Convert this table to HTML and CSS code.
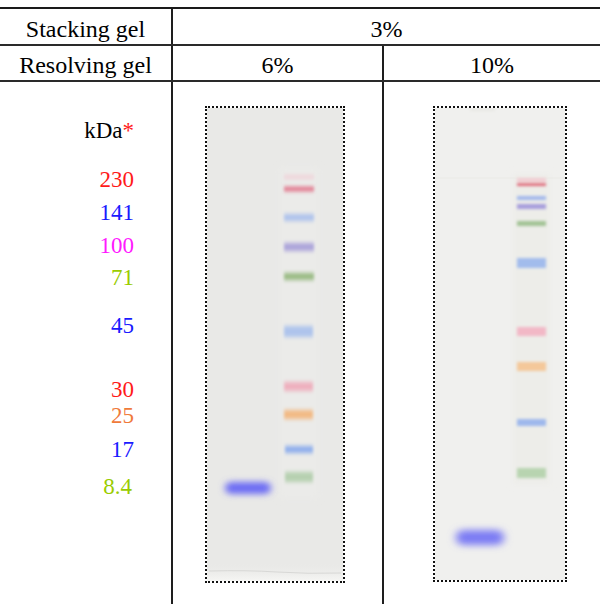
FILE: index.html
```html
<!DOCTYPE html>
<html>
<head>
<meta charset="utf-8">
<link rel="stylesheet" href="styles.css">
</head>
<body>
<div class="table">
  <div class="row row1">
    <div class="cell label">Stacking gel</div>
    <div class="cell wide">3%</div>
  </div>
  <div class="row row2">
    <div class="cell label">Resolving gel</div>
    <div class="cell c6">6%</div>
    <div class="cell c10">10%</div>
  </div>
  <div class="row row3">
    <div class="cell label markers">
      <div class="mk m-kda">kDa<span class="red">*</span></div>
      <div class="mk m230 red">230</div>
      <div class="mk m141 blue">141</div>
      <div class="mk m100 magenta">100</div>
      <div class="mk m71 lime">71</div>
      <div class="mk m45 blue">45</div>
      <div class="mk m30 red">30</div>
      <div class="mk m25 orange">25</div>
      <div class="mk m17 blue">17</div>
      <div class="mk m84 lime">8.4</div>
    </div>
    <div class="cell c6 gelcell">
      <div class="gel gel6">
        <svg width="136" height="473" viewBox="0 0 136 473" xmlns="http://www.w3.org/2000/svg">
          <defs>
            <filter id="b1" x="-50%" y="-300%" width="200%" height="700%"><feGaussianBlur stdDeviation="1.8 2.3"/></filter>
            <filter id="b2" x="-50%" y="-50%" width="200%" height="200%"><feGaussianBlur stdDeviation="3"/></filter>
            <filter id="b3" x="-50%" y="-200%" width="200%" height="500%"><feGaussianBlur stdDeviation="3.5 3"/></filter>
            <linearGradient id="bot1" x1="0" y1="0" x2="0" y2="1">
              <stop offset="0" stop-color="#eaeae8" stop-opacity="0"/>
              <stop offset="1" stop-color="#f6f6f4"/>
            </linearGradient>
          </defs>
          <rect width="136" height="473" fill="#e9e9e7"/>
          <rect x="73" y="60" width="38" height="330" fill="#ebebe9" filter="url(#b2)"/>
          <rect y="455" width="136" height="18" fill="url(#bot1)"/>
          <path d="M2 463 Q40 462 70 464 T134 465" stroke="#d8d8d6" stroke-width="1" fill="none"/>
          <g filter="url(#b1)">
            <rect x="77" y="67" width="30" height="4" fill="#f0d2d8"/>
            <rect x="77" y="79" width="30" height="4" fill="#e0607a"/>
            <rect x="77" y="106" width="30" height="7" fill="#aec2ec"/>
            <rect x="77" y="135" width="30" height="8" fill="#aca4da"/>
            <rect x="77" y="165" width="30" height="7" fill="#98ba82"/>
            <rect x="77" y="218" width="29" height="11" fill="#aec4ec"/>
            <rect x="77" y="274" width="29" height="9" fill="#eeb0be"/>
            <rect x="77" y="302" width="29" height="9" fill="#f2ba84"/>
            <rect x="78" y="338" width="28" height="7" fill="#8eaeec"/>
            <rect x="78" y="364" width="28" height="10" fill="#b6d0b0"/>
          </g>
          <rect x="18" y="374" width="46" height="12" rx="6" fill="#6c6cf4" filter="url(#b3)"/>
        </svg>
      </div>
    </div>
    <div class="cell c10 gelcell">
      <div class="gel gel10">
        <svg width="130" height="472" viewBox="0 0 130 472" xmlns="http://www.w3.org/2000/svg">
          <defs>
            <filter id="d1" x="-50%" y="-300%" width="200%" height="700%"><feGaussianBlur stdDeviation="1.8 1.8"/></filter>
            <filter id="d2" x="-50%" y="-50%" width="200%" height="200%"><feGaussianBlur stdDeviation="3"/></filter>
            <filter id="d3" x="-50%" y="-200%" width="200%" height="500%"><feGaussianBlur stdDeviation="4 3.5"/></filter>
          </defs>
          <rect width="130" height="472" fill="#f0f0ee"/>
          <rect x="78" y="66" width="37" height="310" fill="#edede9" filter="url(#d2)"/>
          <rect x="0" y="69.5" width="130" height="1" fill="#eaeae6"/>
          <rect x="35" y="0" width="25" height="3" fill="#e8e8e4" filter="url(#d1)"/>
          <g filter="url(#d1)">
            <rect x="82" y="70" width="29" height="4" fill="#f2ccd2"/>
            <rect x="82" y="75" width="29" height="3" fill="#e06a7c"/>
            <rect x="82" y="88" width="29" height="4" fill="#a2b8ec"/>
            <rect x="82" y="96" width="29" height="5" fill="#a69ddc"/>
            <rect x="82" y="113" width="29" height="5" fill="#a2c294"/>
            <rect x="82" y="150" width="29" height="10" fill="#a2bcec"/>
            <rect x="82" y="219" width="29" height="9" fill="#f2b8c6"/>
            <rect x="82" y="254" width="29" height="9" fill="#f4c89a"/>
            <rect x="82" y="311" width="29" height="7" fill="#9eb8ec"/>
            <rect x="82" y="360" width="29" height="10" fill="#b8d4b0"/>
          </g>
          <rect x="21" y="422" width="48" height="15" rx="7" fill="#7c7cf4" filter="url(#d3)"/>
        </svg>
      </div>
    </div>
  </div>
</div>
</body>
</html>
```
FILE: styles.css
```css
html, body {
  margin: 0;
  padding: 0;
  background: #ffffff;
}

body {
  font-family: "Times New Roman", "Liberation Serif", Tinos, "Nimbus Roman", "Nimbus Roman No9 L", "FreeSerif", "Noto Serif", "DejaVu Serif", Times, serif;
  color: #000;
}

.table {
  width: 600px;
  height: 604px;
  padding-top: 7px;
  box-sizing: border-box;
  overflow: hidden;
}

.row {
  display: flex;
  border-bottom: 2px solid #2a2a2a;
}

.row1 {
  border-top: 2px solid #1a1a1a;
  height: 35px;
}

.row2 {
  height: 34px;
}

.row3 {
  border-bottom: none;
  height: 522px;
}

.cell {
  font-size: 24px;
  text-align: center;
  box-sizing: border-box;
}

.row1 .cell {
  padding-top: 6px;
  line-height: 29px;
}

.row2 .cell {
  padding-top: 5px;
  line-height: 29px;
}

.label {
  width: 173px;
  flex: none;
  border-right: 2px solid #1e1e1e;
}

.wide {
  flex: 1;
}

.c6 {
  width: 211px;
  flex: none;
  border-right: 2px solid #1e1e1e;
}

.c10 {
  flex: 1;
}

.markers {
  display: flex;
  flex-direction: column;
  align-items: flex-end;
  padding-right: 37px;
}

.mk {
  font-size: 23px;
  line-height: 24px;
  height: 24px;
  text-align: right;
}

.m-kda { margin-top: 37px; }
.m230 { margin-top: 25px; }
.m141 { margin-top: 9px; }
.m100 { margin-top: 9px; }
.m71 { margin-top: 8px; }
.m45 { margin-top: 24px; }
.m30 { margin-top: 40px; }
.m25 { margin-top: 2px; }
.m17 { margin-top: 10px; }
.m84 { margin-top: 13px; margin-right: 2px; }

.red { color: #ff1a1a; }
.blue { color: #1a1aff; }
.magenta { color: #ff1aff; }
.lime { color: #99cc00; }
.orange { color: #f07a3a; }

.gelcell {
  padding-top: 24px;
}

.gel {
  border: 2px dotted #111;
  line-height: 0;
}

.gel svg {
  display: block;
}

.gel6 {
  width: 136px;
  height: 473px;
  margin-left: 32px;
}

.gel10 {
  width: 130px;
  height: 472px;
  margin-left: 49px;
}
```
